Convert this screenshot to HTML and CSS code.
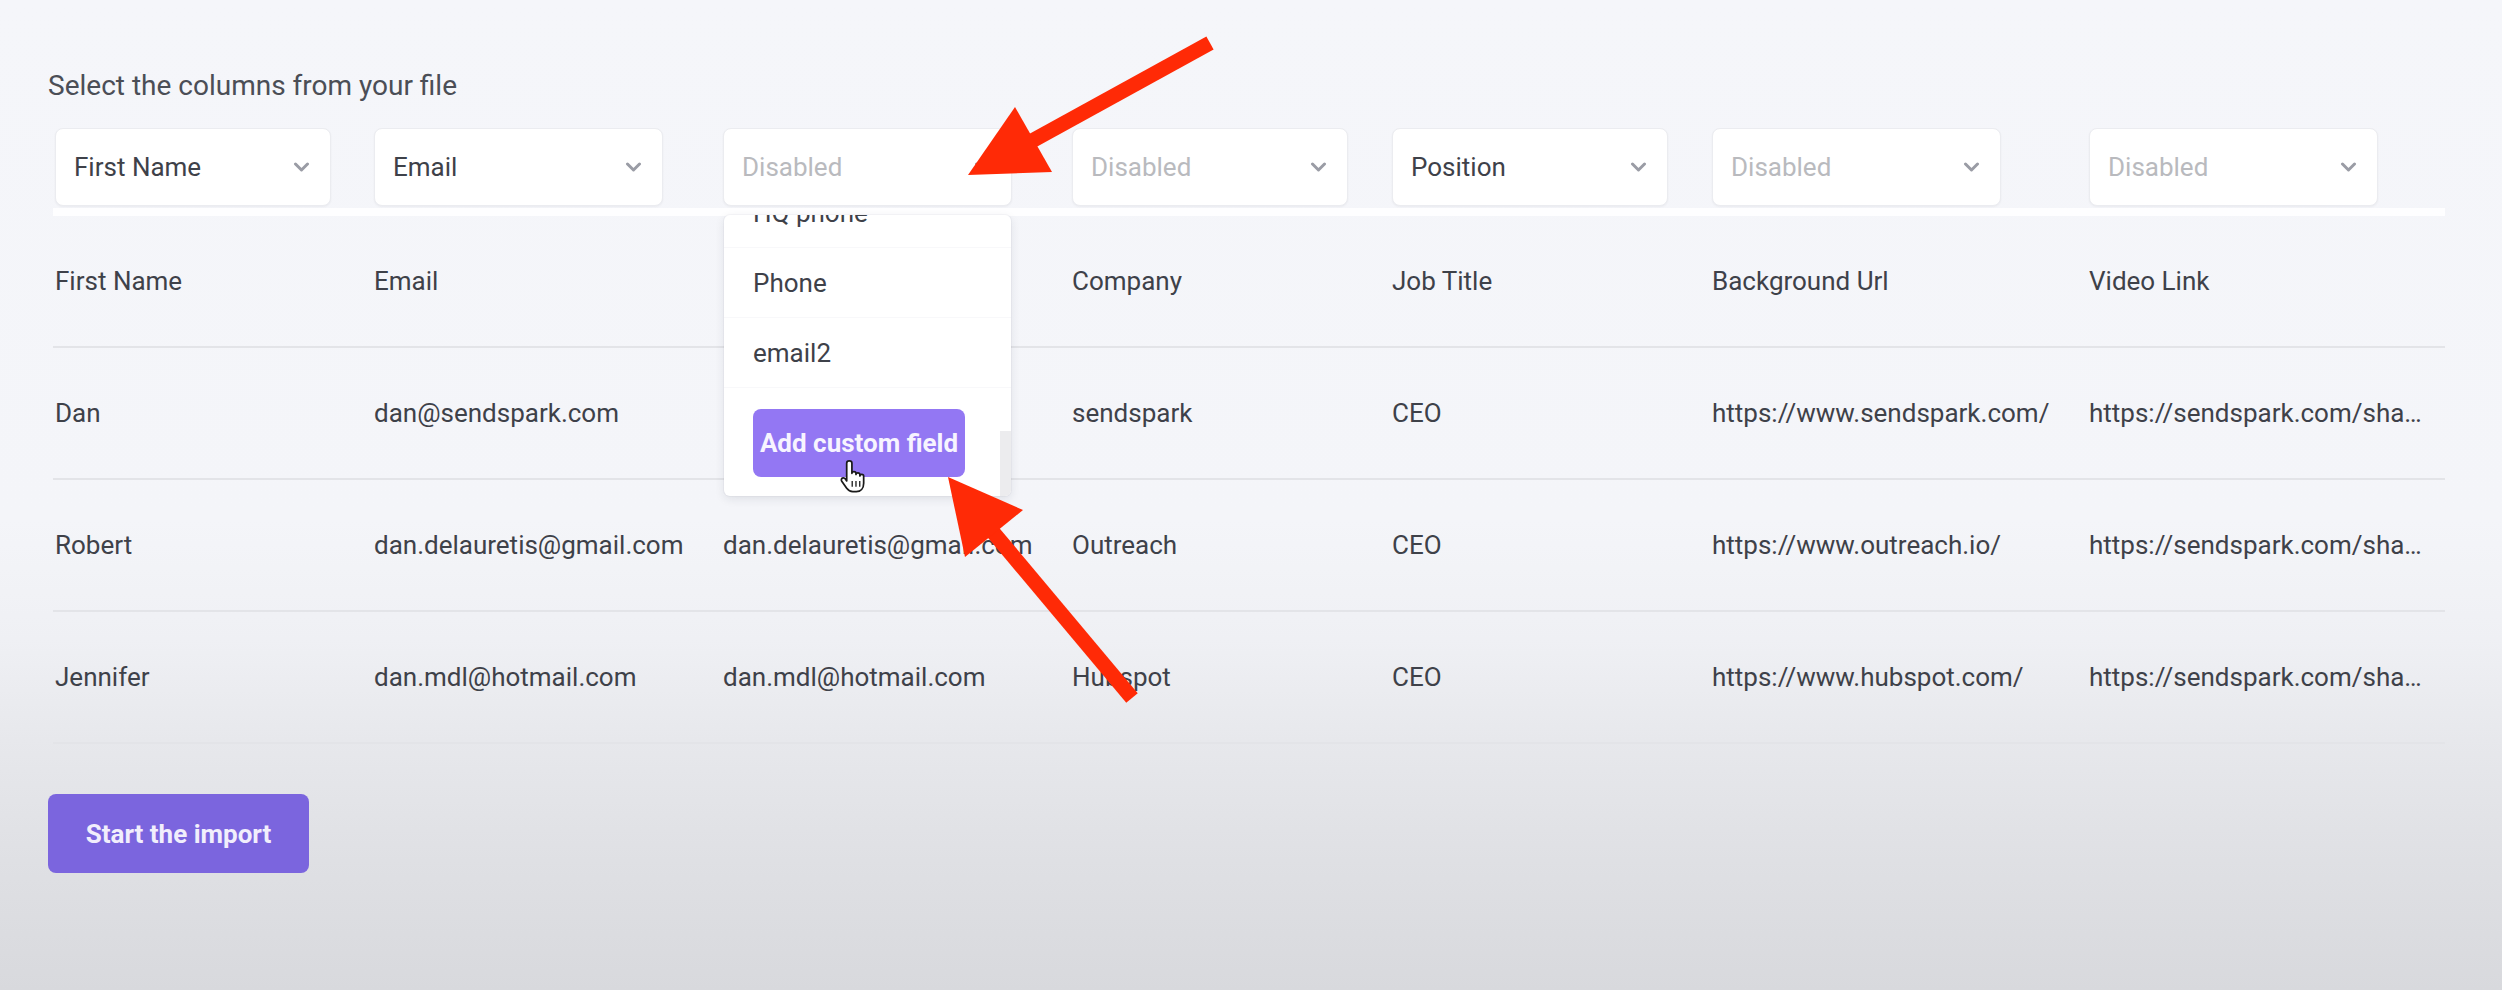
FILE: index.html
```html
<!DOCTYPE html>
<html lang="en">
<head>
<meta charset="utf-8">
<title>Select the columns</title>
<link rel="stylesheet" href="styles.css">
</head>
<body>
<main class="page">
  <p class="title">Select the columns from your file</p>

  <div class="table">
    <div class="grid selects">
      <div class="cell"><div class="select sel-n"><span class="val">First Name</span><svg class="chev" viewBox="0 0 16 10"><polyline points="2,2 8,8 14,2"/></svg></div></div>
      <div class="cell"><div class="select sel-w"><span class="val">Email</span><svg class="chev" viewBox="0 0 16 10"><polyline points="2,2 8,8 14,2"/></svg></div></div>
      <div class="cell">
        <div class="select sel-w open"><span class="val off">Disabled</span><svg class="chev" viewBox="0 0 16 10"><polyline points="2,2 8,8 14,2"/></svg>
          <div class="menu">
            <ul class="menu-list">
              <li class="opt">HQ phone</li>
              <li class="opt">Phone</li>
              <li class="opt">email2</li>
              <li class="opt-add"><button class="add-btn">Add custom field</button></li>
            </ul>
            <div class="thumb"></div>
          </div>
        </div>
      </div>
      <div class="cell"><div class="select sel-n"><span class="val off">Disabled</span><svg class="chev" viewBox="0 0 16 10"><polyline points="2,2 8,8 14,2"/></svg></div></div>
      <div class="cell"><div class="select sel-n"><span class="val">Position</span><svg class="chev" viewBox="0 0 16 10"><polyline points="2,2 8,8 14,2"/></svg></div></div>
      <div class="cell"><div class="select sel-w"><span class="val off">Disabled</span><svg class="chev" viewBox="0 0 16 10"><polyline points="2,2 8,8 14,2"/></svg></div></div>
      <div class="cell"><div class="select sel-w"><span class="val off">Disabled</span><svg class="chev" viewBox="0 0 16 10"><polyline points="2,2 8,8 14,2"/></svg></div></div>
    </div>

    <div class="band"></div>

    <div class="grid row">
      <div class="td">First Name</div>
      <div class="td">Email</div>
      <div class="td"></div>
      <div class="td">Company</div>
      <div class="td">Job Title</div>
      <div class="td">Background Url</div>
      <div class="td trunc">Video Link</div>
    </div>
    <div class="grid row">
      <div class="td">Dan</div>
      <div class="td">dan@sendspark.com</div>
      <div class="td"></div>
      <div class="td">sendspark</div>
      <div class="td">CEO</div>
      <div class="td">https://www.sendspark.com/</div>
      <div class="td trunc">https://sendspark.com/share/dan-video</div>
    </div>
    <div class="grid row">
      <div class="td">Robert</div>
      <div class="td">dan.delauretis@gmail.com</div>
      <div class="td">dan.delauretis@gmail.com</div>
      <div class="td">Outreach</div>
      <div class="td">CEO</div>
      <div class="td">https://www.outreach.io/</div>
      <div class="td trunc">https://sendspark.com/share/robert-video</div>
    </div>
    <div class="grid row">
      <div class="td">Jennifer</div>
      <div class="td">dan.mdl@hotmail.com</div>
      <div class="td">dan.mdl@hotmail.com</div>
      <div class="td">Hubspot</div>
      <div class="td">CEO</div>
      <div class="td">https://www.hubspot.com/</div>
      <div class="td trunc">https://sendspark.com/share/jennifer-video</div>
    </div>
  </div>

  <button class="start-btn">Start the import</button>

  <svg class="overlay" viewBox="0 0 2502 990" width="2502" height="990">
    <g class="arrow">
      <line x1="1210" y1="43" x2="1030" y2="142"/>
      <polygon points="968,175 1015,107 1052,172"/>
    </g>
    <g class="arrow">
      <line x1="1132" y1="698" x2="992" y2="531"/>
      <polygon points="948,477 1023,510 965,557"/>
    </g>
    <g class="cursor" transform="translate(838,460) scale(1.45)">
      <path d="M6 2.2C6 1.2 6.8 0.6 7.8 0.6C8.8 0.6 9.6 1.2 9.6 2.2V9.2C9.6 8.5 10.2 8 11 8C11.8 8 12.4 8.5 12.4 9.3V10C12.4 9.3 13 8.9 13.7 8.9C14.5 8.9 15.1 9.4 15.1 10.2V11C15.1 10.3 15.7 9.9 16.4 9.9C17.1 9.9 17.7 10.4 17.7 11.2V16C17.7 19.6 15.6 21.8 12.6 21.8H10.2C8.2 21.8 7 20.9 6 19.5L2.6 14.6C2.1 13.8 2.3 12.9 3 12.5C3.7 12.1 4.6 12.4 5.1 13.1L6 14.4Z"/>
      <line x1="9.8" y1="14.5" x2="9.8" y2="18.5"/>
      <line x1="12.4" y1="14.5" x2="12.4" y2="18.5"/>
      <line x1="15" y1="14.5" x2="15" y2="18.5"/>
    </g>
  </svg>
</main>
</body>
</html>
```

FILE: styles.css
```css
html, body {
  margin: 0;
  padding: 0;
}

body {
  width: 2502px;
  height: 990px;
  overflow: hidden;
  font-family: Roboto, "Liberation Sans", Arial, sans-serif;
  color: #3e4149;
  background: linear-gradient(to bottom,
    #f5f6fa 0px,
    #f4f5f9 520px,
    #eff0f4 640px,
    #e7e8ec 740px,
    #dfe0e4 860px,
    #d8d9dd 990px);
}

.page {
  position: relative;
  box-sizing: border-box;
  height: 990px;
  padding: 70px 0 0 48px;
}

.title {
  margin: 0;
  font-size: 28px;
  line-height: 32px;
  color: #4b4e56;
}

.table {
  margin: 26px 0 0 7px;
  width: 2390px;
}

.grid {
  display: grid;
  grid-template-columns: 319px 349px 349px 320px 320px 377px 356px;
}

.selects {
  height: 78px;
  position: relative;
  z-index: 5;
}

.cell {
  position: relative;
}

.select {
  position: relative;
  box-sizing: border-box;
  height: 78px;
  display: flex;
  align-items: center;
  justify-content: space-between;
  padding: 0 20px 0 18px;
  background: #ffffff;
  border: 1px solid #ebecf0;
  border-radius: 8px;
  box-shadow: 0 1px 2px rgba(30, 35, 60, 0.05);
}

.sel-n { width: 276px; }
.sel-w { width: 289px; }

.val {
  font-size: 26px;
  color: #3e4149;
}

.val.off {
  color: #b9babe;
}

.chev {
  width: 17px;
  height: 10px;
  fill: none;
  stroke: #9a9ca5;
  stroke-width: 3;
  stroke-linecap: round;
  stroke-linejoin: round;
}

.menu {
  position: absolute;
  top: 86px;
  left: 0;
  width: 287px;
  height: 281px;
  background: #ffffff;
  border-radius: 6px;
  box-shadow: 0 3px 10px rgba(30, 35, 60, 0.10), 0 0 0 1px rgba(30, 35, 60, 0.03);
  overflow: hidden;
}

.menu-list {
  list-style: none;
  margin: -37px 0 0 0;
  padding: 0;
}

.opt {
  box-sizing: border-box;
  height: 70px;
  display: flex;
  align-items: center;
  padding-left: 29px;
  font-size: 26px;
  color: #3e4149;
  border-bottom: 1px solid #f8f8fa;
}

.opt-add {
  padding: 21px 0 0 29px;
}

.add-btn {
  height: 68px;
  width: 212px;
  padding: 0;
  border: none;
  border-radius: 8px;
  background: #9377f3;
  color: #f7f4ff;
  font-family: Roboto, "Liberation Sans", Arial, sans-serif;
  font-size: 26px;
  font-weight: 700;
}

.thumb {
  position: absolute;
  right: 0;
  top: 216px;
  bottom: 0;
  width: 11px;
  background: #ececee;
}

.band {
  height: 8px;
  margin-top: 2px;
  background: rgba(255, 255, 255, 0.9);
  width: 2392px;
  margin-left: -2px;
}

.row {
  box-sizing: border-box;
  height: 132px;
  align-items: center;
  border-bottom: 2px solid #e3e4e8;
  margin-left: -2px;
  padding-left: 2px;
  width: 2392px;
}

.td {
  font-size: 26px;
  color: #3e4149;
  white-space: nowrap;
  overflow: hidden;
}

.td.trunc {
  text-overflow: ellipsis;
  padding-right: 20px;
}

.start-btn {
  display: block;
  margin-top: 50px;
  width: 261px;
  height: 79px;
  padding: 0;
  border: none;
  border-radius: 8px;
  background: #7b65de;
  color: #f1eefc;
  font-family: Roboto, "Liberation Sans", Arial, sans-serif;
  font-size: 26px;
  font-weight: 700;
}

.overlay {
  position: absolute;
  left: 0;
  top: 0;
  z-index: 20;
  pointer-events: none;
}

.arrow line {
  stroke: #ff2a06;
  stroke-width: 15;
}

.arrow polygon {
  fill: #ff2a06;
}

.cursor path {
  fill: #ffffff;
  stroke: #1a1a1a;
  stroke-width: 1.2;
  stroke-linejoin: round;
}

.cursor line {
  stroke: #1a1a1a;
  stroke-width: 0.9;
}
```
